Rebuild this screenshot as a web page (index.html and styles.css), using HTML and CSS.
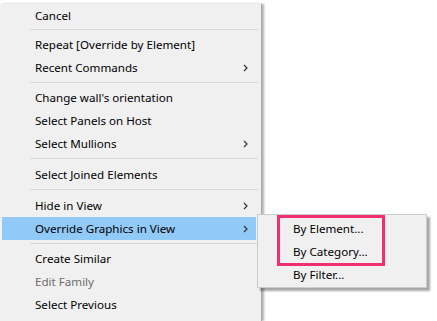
FILE: index.html
```html
<!DOCTYPE html>
<html lang="en">
<head>
    <meta charset="UTF-8">
    <title>Context Menu</title>
    <link rel="stylesheet" href="styles.css">
</head>
<body>

    <!-- Main context menu -->
    <div class="menu">
        <div class="item">Cancel</div>
        <div class="separator"></div>
        <div class="item">Repeat [Override by Element]</div>
        <div class="item has-sub">Recent Commands
            <svg class="chevron" width="5" height="8" viewBox="0 0 5 8"><polyline points="1,1 4,4 1,7" fill="none" stroke="#333" stroke-width="1.2"/></svg>
        </div>
        <div class="separator"></div>
        <div class="item">Change wall's orientation</div>
        <div class="item">Select Panels on Host</div>
        <div class="item has-sub">Select Mullions
            <svg class="chevron" width="5" height="8" viewBox="0 0 5 8"><polyline points="1,1 4,4 1,7" fill="none" stroke="#333" stroke-width="1.2"/></svg>
        </div>
        <div class="separator wide"></div>
        <div class="item">Select Joined Elements</div>
        <div class="separator wide"></div>
        <div class="item has-sub">Hide in View
            <svg class="chevron" width="5" height="8" viewBox="0 0 5 8"><polyline points="1,1 4,4 1,7" fill="none" stroke="#333" stroke-width="1.2"/></svg>
        </div>
        <div class="item has-sub active">Override Graphics in View
            <svg class="chevron" width="5" height="8" viewBox="0 0 5 8"><polyline points="1,1 4,4 1,7" fill="none" stroke="#333" stroke-width="1.2"/></svg>
        </div>
        <div class="separator"></div>
        <div class="item">Create Similar</div>
        <div class="item disabled">Edit Family</div>
        <div class="item">Select Previous</div>
    </div>

    <!-- Sub menu for Override Graphics in View -->
    <div class="submenu">
        <div class="sub-item">By Element...</div>
        <div class="sub-item">By Category...</div>
        <div class="sub-item">By Filter...</div>
        <div class="callout"></div>
    </div>

</body>
</html>
```

FILE: styles.css
```css
html, body {
    margin: 0;
    padding: 0;
    background-color: #ffffff;
    overflow: hidden;
    height: 321px;
}

body {
    font-family: 'Noto Sans', 'Open Sans', sans-serif;
    font-size: 11.6px;
    color: #000;
    position: relative;
}

.menu {
    margin-top: 4px;
    width: 261px;
    height: 317px;
    background-color: #f0f0f0;
    border-right: 1px solid #a8a8a8;
    box-shadow: 2px 0 2px rgba(0, 0, 0, 0.3);
}

.item {
    height: 23px;
    line-height: 23px;
    margin: 0 5px 0 2px;
    padding-left: 33px;
    display: flex;
    align-items: center;
    justify-content: space-between;
    white-space: nowrap;
}

.item:first-child {
    height: 22px;
}

.item.active {
    background-color: #91c9f7;
}

.item.disabled {
    color: #6d6d6d;
}

.chevron {
    margin-right: 8px;
}

.separator {
    height: 1px;
    margin: 3px 3px 3px 30px;
    background-color: #d7d7d7;
}

.separator.wide {
    margin-bottom: 4px;
}

/* Sub menu */
.submenu {
    position: absolute;
    left: 257px;
    top: 214px;
    width: 168px;
    padding: 2px 0 1px;
    background-color: #f0f0f0;
    border: 1px solid #cccccc;
    box-shadow: 3px 3px 2px rgba(0, 0, 0, 0.35);
}

.sub-item {
    height: 23px;
    line-height: 23px;
    padding-left: 35px;
    white-space: nowrap;
}

.callout {
    position: absolute;
    left: 19px;
    top: 0;
    width: 102px;
    height: 45px;
    border: 3px solid #f0306e;
}
```
